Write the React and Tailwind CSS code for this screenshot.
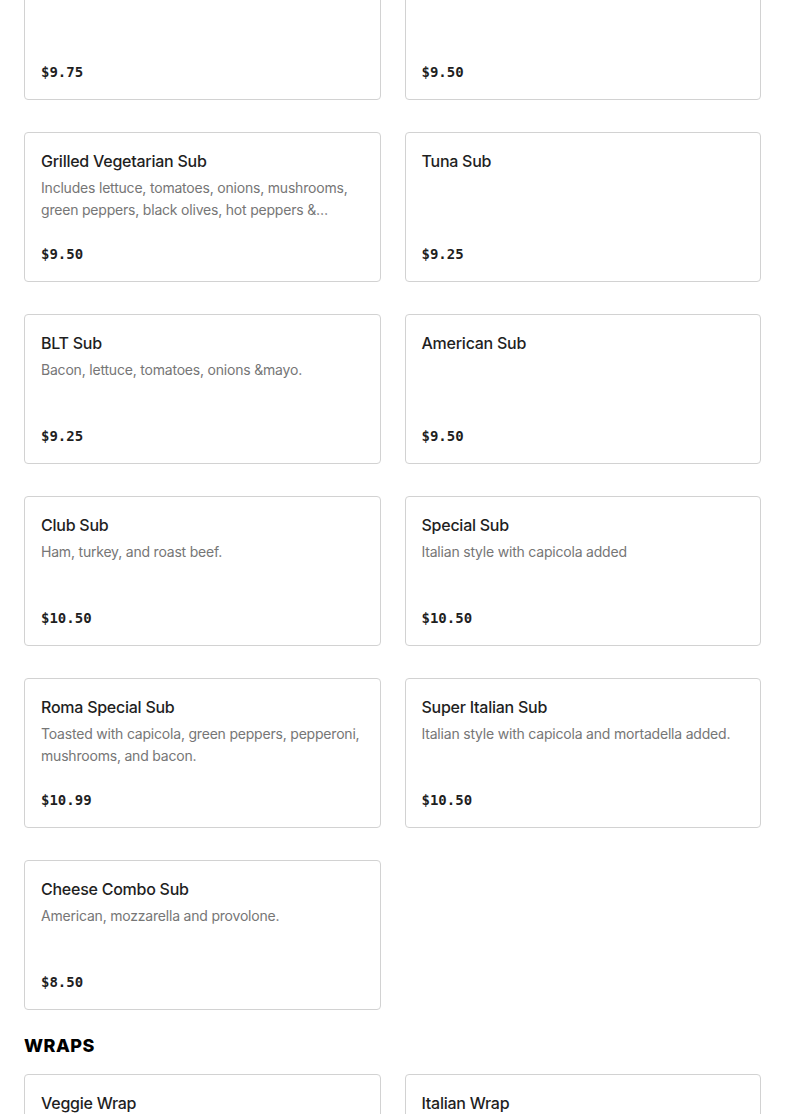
import React from "react";

const subs = [
  { name: "Steak Sub", desc: "", price: "$9.75" },
  { name: "Chicken Sub", desc: "", price: "$9.50" },
  {
    name: "Grilled Vegetarian Sub",
    desc: "Includes lettuce, tomatoes, onions, mushrooms, green peppers, black olives, hot peppers & provolone cheese.",
    price: "$9.50",
  },
  { name: "Tuna Sub", desc: "", price: "$9.25" },
  { name: "BLT Sub", desc: "Bacon, lettuce, tomatoes, onions &mayo.", price: "$9.25" },
  { name: "American Sub", desc: "", price: "$9.50" },
  { name: "Club Sub", desc: "Ham, turkey, and roast beef.", price: "$10.50" },
  { name: "Special Sub", desc: "Italian style with capicola added", price: "$10.50" },
  {
    name: "Roma Special Sub",
    desc: "Toasted with capicola, green peppers, pepperoni, mushrooms, and bacon.",
    price: "$10.99",
  },
  { name: "Super Italian Sub", desc: "Italian style with capicola and mortadella added.", price: "$10.50" },
  { name: "Cheese Combo Sub", desc: "American, mozzarella and provolone.", price: "$8.50" },
];

const wraps = [
  { name: "Veggie Wrap", desc: "", price: "$8.50" },
  { name: "Italian Wrap", desc: "", price: "$9.50" },
];

const Card = ({ item }) => (
  <div className="flex flex-col h-[150px] border border-[#d2d2d2] rounded-[4px] bg-white px-4 pt-4 pb-4">
    <h3 className="text-[16px] leading-[24px] font-medium tracking-[-0.25px] text-[#1f1f1f]">{item.name}</h3>
    <p className="mt-1 text-[14px] leading-[22px] tracking-[-0.2px] text-[#767676] line-clamp-2">{item.desc}</p>
    <div className="mt-auto text-[14px] leading-[22px] font-bold text-[#1f1f1f] font-['DejaVu_Sans_Mono',monospace]">
      {item.price}
    </div>
  </div>
);

export default function App() {
  return (
    <div className="bg-white min-h-screen font-['Inter',sans-serif] overflow-hidden">
      <div className="-mt-[50px] px-6">
        <div className="grid grid-cols-2 gap-x-6 gap-y-8">
          {subs.map((s) => (
            <Card key={s.name} item={s} />
          ))}
        </div>
        <h2 className="mt-[22px] mb-[14px] text-[18px] leading-[28px] font-extrabold text-black tracking-[0.5px]">
          WRAPS
        </h2>
        <div className="grid grid-cols-2 gap-x-6 gap-y-8">
          {wraps.map((s) => (
            <Card key={s.name} item={s} />
          ))}
        </div>
      </div>
    </div>
  );
}
